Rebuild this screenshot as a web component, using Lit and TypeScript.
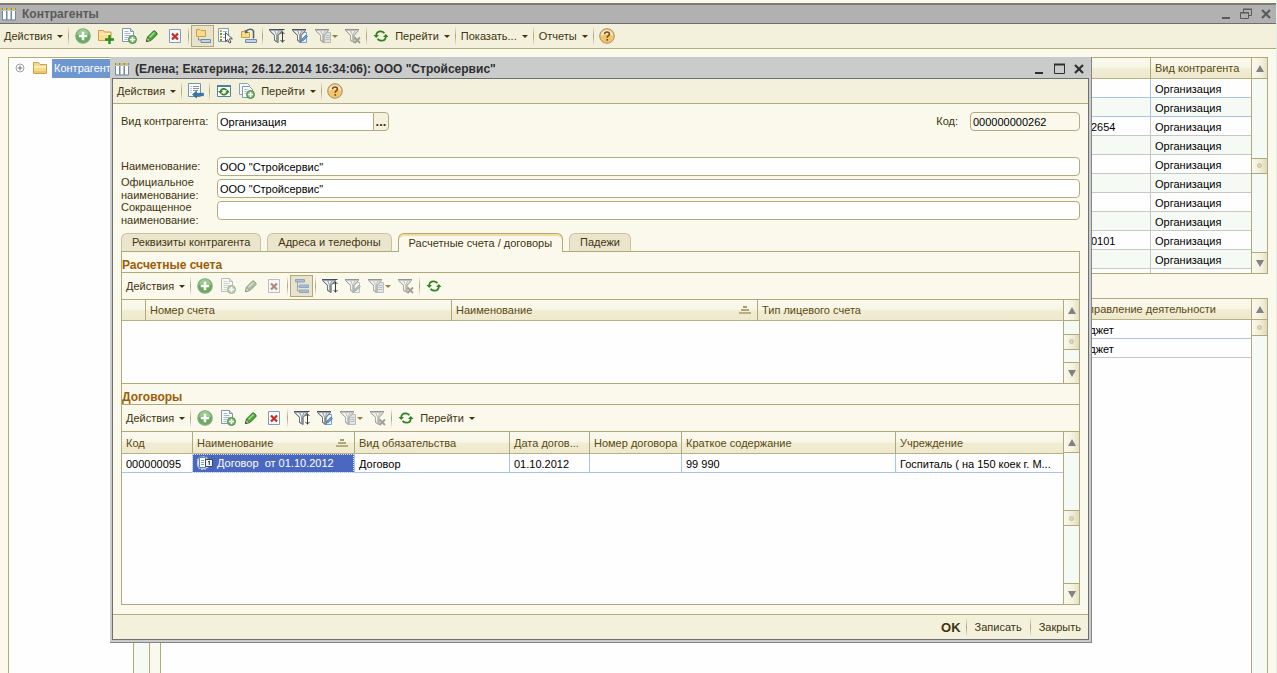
import { LitElement, html, svg, css, nothing } from "lit";
import { customElement, property } from "lit/decorators.js";
import { classMap } from "lit/directives/class-map.js";

const funnel = svg`
  <path d="M0 1h14v1.500L9.500 7.500V15L5 12.500v-5L0 2.500z" fill="#9ca4a9"/>
  <path d="M.5 2.500l5 5v5l3.500 2v-7l4.500-5" fill="none" stroke="#6d777c"/>
  <path d="M2 3h3l2 4v5l-1-.5V7z" fill="#f4f6f7"/>
  <path d="M6.500 3H9L7.800 6.500z" fill="#f4f6f7"/>
  <path d="M10.500 3h1.500L8.500 7z" fill="#dfe3e5"/>
  <path d="M0 1.500h14" stroke="#4b5459"/>`;

const sheet = svg`
  <path d="M1.500.5h8l3 3v10h-11z" fill="#fbfdfe" stroke="#7c99ad"/>
  <path d="M9.500.5v3h3" fill="#d5e3ec" stroke="#7c99ad"/>
  <path d="M3.500 3.500h4M3.500 5.500h6M3.500 7.500h6M3.500 9.500h4M3.500 11.500h3" stroke="#a3b7c4"/>`;

const smallPlus = svg`
  <circle cx="11.500" cy="11.500" r="4" fill="#7db870" stroke="#4d8c46"/>
  <path d="M11.500 9v5M9 11.500h5" stroke="#fff" stroke-width="1.600"/>`;

const arrows = svg`
  <path d="M3.200 7.200C3.500 4.600 5.500 3.200 8 3.400c1.600.1 2.700.8 3.400 1.900" fill="none" stroke="#2e8223" stroke-width="1.700"/>
  <path d="M12.800 8.800c-.3 2.600-2.300 4-4.800 3.800-1.600-.1-2.700-.8-3.400-1.900" fill="none" stroke="#2e8223" stroke-width="1.700"/>
  <path d="M.5 7h5.500L3.200 10zM10 9h5.500L12.800 6z" fill="#2e8223"/>`;

const folderShape = svg`
  <path d="M1.500 13.500v-11h5l1.500 2h6.500v9z" fill="#f6d98a" stroke="#c9a34d"/>
  <path d="M2 6h12v2H2z" fill="#fcecb8"/>
  <path d="M2 11h12v2H2z" fill="#edc766"/>`;

const icons: Record<string, unknown> = {
  table: svg`
    <path d="M2 2.500h12v11H2z" fill="#fff"/>
    <path d="M2 2h3v2.500H2zM6.500 2h3v2.500h-3zM11 2h3v2.500h-3z" fill="#e7bf35"/>
    <path d="M1.500 2v12h4V2M6 2v12h4V2M10.500 2v12h4V2" fill="none" stroke="#71899a"/>
    <path d="M1 4.500h14" stroke="#b9c6cf"/>`,
  add: svg`
    <circle cx="8" cy="8" r="7.200" fill="#67aa5b" stroke="#88a781" stroke-width="1.200"/>
    <path d="M2 7a6 6 0 0 1 12 0c-3-1.500-8-1.500-12 0z" fill="#98cb8c"/>
    <path d="M8 3.800v8.400M3.800 8h8.400" stroke="#fff" stroke-width="2.600"/>`,
  addFolder: svg`
    <path d="M.5 12.500v-10h5l1 1.500h6.500v8.500z" fill="#f8dd92" stroke="#cc9f40"/>
    <path d="M1.500 5.500H12V7H1.500z" fill="#fdeebd"/>
    <path d="M11.500 7v9M7 11.500h9" stroke="#2f8c22" stroke-width="2.400"/>`,
  addSheet: svg`${sheet}${smallPlus}`,
  copySheets: svg`
    <path d="M.5.5h8l2 2v9H.5z" fill="#f4f8fa" stroke="#8ba4b5"/>
    <path d="M3.500 3.500h7l3 3v8h-10z" fill="#fbfdfe" stroke="#7c99ad"/>
    <path d="M5.500 6.500h3M5.500 8.500h2M5.500 10.500h1" stroke="#a3b7c4"/>${smallPlus}`,
  edit: svg`
    <path d="M2.500 13.500l1-4.500 6-6c1-1 4.500 2.300 3.500 3.500l-6 6z" fill="#4ea63c" stroke="#2b7420"/>
    <path d="M5.500 9.500l5-5" stroke="#a5dd92" stroke-width="1.500"/>
    <path d="M2.500 13.500l1-3.800 2.800 2.800z" fill="#f0d9a6" stroke="#38702d" stroke-width=".7"/>
    <path d="M2.200 13.800l.5-1.800 1.300 1.300z" fill="#1f2f1b"/>`,
  remove: svg`
    <path d="M2.500 1.500h11v13h-11z" fill="#f4f9fc" stroke="#7f9db5"/>
    <path d="M5 5.500l6 6M11 5.500l-6 6" stroke="#cc2a1e" stroke-width="2.200"/>`,
  hierarchy: svg`
    <path d="M1.500 8.500v-7h3.500l1 1h4.500v6z" fill="#f9dc8b" stroke="#cc9f40"/>
    <path d="M3.500 9.500v2.500H6" fill="none" stroke="#7b8790"/>
    <path d="M6 11.500h9.500v3H6z" fill="#c3d3e2" stroke="#6f8dab"/>`,
  pick: svg`
    <path d="M.5.500h10v13H.5z" fill="#fafcfd" stroke="#879dac"/>
    <path d="M2 3h2M2 9h2" stroke="#d3a62a" stroke-width="2"/>
    <path d="M2 6h2M2 12h2" stroke="#5e9d50" stroke-width="2"/>
    <path d="M5 3.500h4M5 6.500h2M5 9.500h2" stroke="#9fb0bb"/>
    <path d="M7.500 4.500v9l2.200-2 1.600 3.500 1.700-.8-1.600-3.400h3z" fill="#fff" stroke="#4f4f4f"/>`,
  move: svg`
    <path d="M.5 9.500v-6h3l1 1h4v5z" fill="#f9dc8b" stroke="#cc9f40"/>
    <path d="M5 3.500C7 .5 11 .500 12.500 3v7.500" fill="none" stroke="#59656e" stroke-width="1.600"/>
    <path d="M3.500 1.500l.5 4 3.500-1z" fill="#59656e"/>
    <path d="M4.500 11.500h11v3h-11z" fill="#c3d3e2" stroke="#6f8dab"/>`,
  filterSort: svg`${funnel}
    <path d="M13.500 3.500v11M11.500 6l2-2 2 2M11.500 12l2 2 2-2" fill="none" stroke="#333c42"/>
    <path d="M10 1.500h5.500" stroke="#3f474b"/>`,
  filterEdit: svg`
    <path d="M7.500 4.500h7v10h-7z" fill="#eef4fb" stroke="#7aa0cc"/>${funnel}
    <path d="M9.500 13l.5-2 4-4 1.500 1.500-4 4z" fill="#6b9ddb" stroke="#3f6ea8" stroke-width=".7"/>`,
  filterList: svg`
    <path d="M7.500 4.500h8v10h-8z" fill="#c9dbea" stroke="#7f9db5"/>${funnel}
    <path d="M10.500 7.500h4M10.500 9.500h4M10.500 11.500h4" stroke="#7f9db5"/>`,
  filterClear: svg`${funnel}
    <path d="M9.500 9.500l5.500 5.500M15 9.500L9.500 15" stroke="#745d59" stroke-width="1.800"/>`,
  refresh: arrows,
  help: svg`
    <circle cx="8" cy="8" r="7.300" fill="#f4c46c" stroke="#a5906d"/>
    <path d="M2 8a6 6 0 0 1 12 0c-3-2-9-2-12 0z" fill="#fdebc5"/>
    <path d="M5.600 6.200C5.600 3.300 10.500 3.300 10.500 6c0 1.700-2.300 1.700-2.300 3.700" fill="none" stroke="#7a4a18" stroke-width="1.600"/>
    <path d="M7.400 11h1.700v1.700H7.400z" fill="#7a4a18"/>`,
  saveClose: svg`
    <path d="M.5.500h12v13H.5z" fill="#fbfdfe" stroke="#7392a8"/>
    <path d="M2.500 3.500h1M2.500 5.500h1M2.500 7.500h1M2.500 9.500h1M5 3.500h6M5 5.500h6M5 7.500h5" stroke="#7e95a4"/>
    <path d="M4.500 11.500l4-3.500v2.300h7v2.400h-7V15z" fill="#3577ae" stroke="#235985" stroke-width=".6"/>`,
  reread: svg`
    <path d="M1.500 2.500h13v11h-13z" fill="#fff" stroke="#54809f"/>
    <path d="M1 2h14v2H1z" fill="#4f7fa1"/>
    <path d="M4.500 8.500C5 5.500 9 5 10.500 7M11.500 9c-.5 3-4.500 3.500-6 1.500" fill="none" stroke="#2e8223" stroke-width="1.700"/>
    <path d="M2.200 8h4.600L4.500 11zM9.200 9.500h4.600L11.500 6.500z" fill="#2e8223"/>`,
  levels: svg`
    <path d="M1.500 1.500h9v2.500h-9z" fill="#a9c0d8" stroke="#8ba5c1"/>
    <path d="M3.500 4v9h3M3.500 8.500h3" fill="none" stroke="#98a5af"/>
    <path d="M5.500 7h9v2.500h-9zM5.500 12h9v2.500h-9z" fill="#a9c0d8" stroke="#8ba5c1"/>`,
  contract: svg`
    <circle cx="6" cy="8" r="6" fill="#dce8f2" stroke="#b6cbdd" stroke-width="2" stroke-dasharray="2 1"/>
    <path d="M2.500 2.500h6v10h-6z" fill="#fff" stroke="#6885a6"/>
    <path d="M4 5.500h3M4 7.500h3M4 9.500h3" stroke="#8299b4"/>
    <path d="M8.500 4.500h7v7h-7z" fill="#f7f5e8" stroke="#2d496f"/>
    <path d="M11 7l1.300-1v4" fill="none" stroke="#24395b"/>`,
  folder: folderShape,
  expand: svg`
    <circle cx="8" cy="8" r="4" fill="#fff" stroke="#a5a5a5"/>
    <path d="M5.500 8h5M8 5.500v5" stroke="#777"/>`,
  sort: svg`
    <path d="M6 4h4v2H6z" fill="#a69d6d"/>
    <path d="M4 7h8v2H4z" fill="#b1a777"/>
    <path d="M2 10h12v2H2z" fill="#b8ae80"/>`,
  minimize: svg`<path d="M4 11h8v2H4z" fill="currentColor"/>`,
  maximize: svg`<path d="M3.500 3.500h10v9h-10z" fill="none" stroke="currentColor"/><path d="M3 3.500h11" stroke="currentColor" stroke-width="2"/>`,
  restore: svg`
    <path d="M5.500 6V3.500h8v6H11" fill="none" stroke="currentColor"/>
    <path d="M2.500 6.500h8v6h-8z" fill="none" stroke="currentColor"/>
    <path d="M5 3h9M2 7h9" stroke="currentColor"/>`,
  close: svg`<path d="M4 4l8 8M12 4l-8 8" stroke="currentColor" stroke-width="2.200"/>`,
};

@customElement("ui-icon")
class UiIcon extends LitElement {
  @property() name = "";
  static styles = css`
    :host { display: inline-flex; flex: none; width: 16px; height: 16px; }
    svg { width: 16px; height: 16px; }
  `;
  render() {
    return html`<svg viewBox="0 0 16 16" aria-hidden="true">${icons[this.name]}</svg>`;
  }
}

interface Tool {
  icon?: string;
  label?: string;
  hint?: string;
  menu?: boolean;
  on?: boolean;
  muted?: boolean;
  strong?: boolean;
}
type ToolItem = Tool | "|";

@customElement("tool-bar")
class ToolBar extends LitElement {
  @property({ attribute: false }) items: ToolItem[] = [];
  static styles = css`
    :host { display: flex; align-items: center; }
    button {
      display: flex; align-items: center; justify-content: center;
      height: 22px; min-width: 23px; border: 1px solid transparent;
      background: none; color: #40350f; font: 11px "Liberation Sans", Arial, sans-serif;
      white-space: nowrap;
    }
    .icon { padding: 0 2px; margin: 0; }
    .icon.menu { padding: 0 2px 0 3px; }
    .text { padding: 0 5px; }
    .text.menu { padding: 0 2px; }
    .on { background: #e9e3cb; border-color: #b1a77f; }
    .muted ui-icon { opacity: 0.6; filter: grayscale(0.6); }
    .text.strong { padding: 0 2px; font-weight: bold; font-size: 13px; }
    .caret {
      width: 0; height: 0; margin-left: 5px;
      border: 3px solid transparent; border-top-color: currentColor; border-bottom: 0;
    }
    .icon .caret { margin-left: 1px; color: #93803d; }
    .line {
      flex: none; width: 1px; height: 20px; margin: 0 2px;
      background: linear-gradient(transparent, #aca37c, transparent);
    }
  `;
  render() {
    return this.items.map((t) =>
      t === "|"
        ? html`<span class="line"></span>`
        : html`<button
            class=${classMap({ icon: !!t.icon, text: !!t.label, menu: !!t.menu, on: !!t.on, muted: !!t.muted, strong: !!t.strong })}
            aria-label=${t.label ?? t.hint ?? ""}
          >${t.icon ? html`<ui-icon name=${t.icon}></ui-icon>` : nothing}${t.label ?? nothing}${t.menu
            ? html`<span class="caret"></span>`
            : nothing}</button>`
    );
  }
}

@customElement("scroll-bar")
class ScrollBar extends LitElement {
  @property({ type: Boolean }) start = false;
  static styles = css`
    :host {
      display: flex; flex-direction: column; flex: none; box-sizing: border-box;
      width: 16px; border-left: 1px solid #b0a97c; background: #f5faf5;
    }
    button {
      flex: none; display: flex; align-items: center; justify-content: center;
      height: 21px; padding: 0; border: 0;
      background: linear-gradient(90deg, #fbf9ee, #f4f1dd 60%, #e6e0c4);
    }
    .up { border-bottom: 1px solid #b0a97c; }
    .down { border-top: 1px solid #b0a97c; }
    .up i { border: 4px solid transparent; border-bottom: 7px solid #828282; border-top: 0; }
    .down i { border: 4px solid transparent; border-top: 7px solid #828282; border-bottom: 0; }
    .track { flex: 1; display: flex; flex-direction: column; justify-content: center; }
    .first { justify-content: flex-start; }
    .thumb {
      display: flex; align-items: center; justify-content: center; box-sizing: border-box;
      height: 16px; border: solid #b0a97c; border-width: 1px 0;
      background: linear-gradient(90deg, #fbf9ee, #f0ebd3 60%, #e0d9b8);
    }
    .first .thumb { border-top: 0; }
    .dot { width: 3px; height: 3px; border: 1px solid #c9c19c; border-radius: 50%; background: #ddd6b6; }
  `;
  render() {
    return html`
      <button class="up" aria-label="Вверх"><i></i></button>
      <div class=${classMap({ track: true, first: this.start })}>
        <div class="thumb"><span class="dot"></span></div>
      </div>
      ${this.start ? nothing : html`<button class="down" aria-label="Вниз"><i></i></button>`}
    `;
  }
}

const mainTools: ToolItem[] = [
  { label: "Действия", menu: true }, "|",
  { icon: "add", hint: "Добавить" }, { icon: "addFolder", hint: "Новая группа" },
  { icon: "addSheet", hint: "Скопировать" }, { icon: "edit", hint: "Изменить" },
  { icon: "remove", hint: "Пометить на удаление" }, "|",
  { icon: "hierarchy", hint: "Иерархия", on: true }, { icon: "pick", hint: "Выбрать" },
  { icon: "move", hint: "Переместить в группу" }, "|",
  { icon: "filterSort", hint: "Отбор и сортировка" }, { icon: "filterEdit", hint: "Отбор по значению" },
  { icon: "filterList", hint: "История отборов", menu: true, muted: true },
  { icon: "filterClear", hint: "Отключить отбор", muted: true }, "|",
  { icon: "refresh", hint: "Обновить" }, { label: "Перейти", menu: true }, "|",
  { label: "Показать...", menu: true }, "|", { label: "Отчеты", menu: true }, "|",
  { icon: "help", hint: "Справка" },
];

const dialogTools: ToolItem[] = [
  { label: "Действия", menu: true }, "|", { icon: "saveClose", hint: "Записать и закрыть" }, "|",
  { icon: "reread", hint: "Перечитать" }, { icon: "copySheets", hint: "Скопировать" },
  { label: "Перейти", menu: true }, "|", { icon: "help", hint: "Справка" },
];

const accountTools: ToolItem[] = [
  { label: "Действия", menu: true }, "|", { icon: "add", hint: "Добавить" },
  { icon: "addSheet", hint: "Скопировать", muted: true }, { icon: "edit", hint: "Изменить", muted: true },
  { icon: "remove", hint: "Удалить", muted: true }, "|", { icon: "levels", hint: "Иерархия", on: true }, "|",
  { icon: "filterSort", hint: "Отбор и сортировка" }, { icon: "filterEdit", hint: "Отбор по значению", muted: true },
  { icon: "filterList", hint: "История отборов", menu: true, muted: true },
  { icon: "filterClear", hint: "Отключить отбор", muted: true }, "|", { icon: "refresh", hint: "Обновить" },
];

const contractTools: ToolItem[] = [
  { label: "Действия", menu: true }, "|", { icon: "add", hint: "Добавить" },
  { icon: "addSheet", hint: "Скопировать" }, { icon: "edit", hint: "Изменить" },
  { icon: "remove", hint: "Удалить" }, "|",
  { icon: "filterSort", hint: "Отбор и сортировка" }, { icon: "filterEdit", hint: "Отбор по значению" },
  { icon: "filterList", hint: "История отборов", menu: true, muted: true },
  { icon: "filterClear", hint: "Отключить отбор", muted: true }, "|",
  { icon: "refresh", hint: "Обновить" }, { label: "Перейти", menu: true },
];

const footerTools: ToolItem[] = [
  { label: "OK", strong: true }, "|", { label: "Записать" }, "|", { label: "Закрыть" },
];

const tabs = ["Реквизиты контрагента", "Адреса и телефоны", "Расчетные счета / договоры", "Падежи"];
const codes = ["", "", "2654", "", "", "", "", "", "0101", "", ""];

@customElement("app-root")
class AppRoot extends LitElement {
  static styles = css`
    :host {
      display: flex; flex-direction: column; position: relative; box-sizing: border-box;
      height: 100vh; overflow: hidden; padding-top: 3px; border-right: 1px solid #e0efe6;
      background: #fbf9ec; color: #40350f; font: 11px/13px "Liberation Sans", Arial, sans-serif;
    }
    h1, h2, h3 { margin: 0; }
    .bar { display: flex; align-items: center; gap: 5px; flex: none; height: 20px; box-sizing: border-box; }
    .bar h1, .bar h2 { flex: 1; font-size: 12px; line-height: 16px; }
    .bar button { display: flex; padding: 0; border: 0; background: none; color: inherit; }
    .winbtns { display: flex; gap: 4px; }
    .mainbar {
      height: 21px; padding: 0 2px 0 1px; color: #5a5a5a; background: #b1b1b1;
      border-top: 2px solid #7d7b76; border-bottom: 1px solid #6e6e6e;
    }
    .maintools { flex: none; height: 24px; padding-left: 1px; background: #f3f0dc; border-bottom: 1px solid #b5ad80; }
    .desk { flex: 1; min-height: 0; display: flex; gap: 10px; padding: 8px 8px 0; }
    .tree, .grid { border: 1px solid #b0a97c; background: #fefefe; }
    .tree { flex: none; width: 140px; display: flex; border-bottom: 0; overflow: hidden; }
    .nodes { flex: 1; min-width: 0; }
    .node { display: flex; align-items: center; height: 20px; padding-left: 3px; gap: 4px; }
    .node b { padding: 0 2px; font-weight: normal; line-height: 19px; background: #6e97d0; color: #fff; }
    .rail { flex: none; width: 15px; border-left: 1px solid #b0a97c; background: #f5faf5; }
    .lists { flex: 1; min-width: 0; display: flex; flex-direction: column; gap: 24px; }
    .grid { display: flex; min-height: 0; box-sizing: border-box; overflow: hidden; }
    .upper { flex: none; height: 217px; }
    .lower { flex: 1; border-bottom: 0; }
    .rows { flex: 1; min-width: 0; overflow: hidden; }
    table { width: 100%; border-collapse: separate; border-spacing: 0; table-layout: fixed; }
    th, td {
      box-sizing: border-box; padding: 0 0 0 4px; text-align: left; font-weight: normal;
      white-space: nowrap; overflow: hidden; text-overflow: ellipsis;
    }
    th + th, td + td { border-left: 1px solid #c6c9c2; }
    th + th { border-left-color: #b0a97c; }
    th {
      height: 21px; color: #5b4a12; border-bottom: 1px solid #b8b087;
      background: linear-gradient(#fbf9ee, #f8f6e6 45%, #f1edd4 55%, #efe9cc);
    }
    .contracts th { height: 22px; padding-top: 1px; }
    td { height: 19px; padding-top: 2px; color: #000; border-bottom: 1px solid #c6c9c2; }
    .blue td { border-color: #a9c4e6; }
    .striped tr:nth-child(even) td { background: #f5faf5; }
    .c-type { width: 101px; }
    .c-code { width: 64px; }
    .c-dir { width: 182px; }
    .c-mark { width: 23px; }
    .c-wide { width: 306px; }
    .c-id { width: 70px; }
    .c-name { width: 162px; }
    .c-kind { width: 155px; }
    .c-date { width: 80px; }
    .c-num { width: 92px; }
    .c-short { width: 214px; }
    .sorted { display: flex; justify-content: space-between; align-items: center; padding-right: 4px; }
    td.picked { padding: 0 4px; color: #fff; background: #4b68c0; outline: 1px dotted #dfe6ff; outline-offset: -1px; }
    .withicon { display: flex; align-items: center; gap: 4px; white-space: pre; }

    .dialog {
      position: absolute; left: 110px; right: 184px; top: 57px; bottom: 30px;
      display: flex; flex-direction: column; box-sizing: border-box; padding: 0 2px 2px;
      background: #cacccc; border-right: 1px solid #86868a; border-bottom: 1px solid #86868a;
    }
    .dialog > .bar { height: 21px; padding: 2px 2px 0 2px; color: #2e2e2e; }
    .frame {
      flex: 1; min-height: 0; display: flex; flex-direction: column;
      border: 1px solid #6f6f6f; background: #fbf9ec;
    }
    .dialogtools { flex: none; height: 24px; padding-left: 1px; background: #f3f0dc; border-bottom: 1px solid #b5ad80; }
    .body { flex: 1; min-height: 0; display: flex; flex-direction: column; padding: 8px 8px 9px; }
    .head { display: flex; align-items: center; margin-bottom: 26px; }
    .head label { width: 96px; }
    .head .codelabel { width: auto; margin-left: auto; padding-right: 12px; }
    input {
      box-sizing: border-box; height: 19px; min-width: 0; width: 100%; padding: 0 2px;
      border: 1px solid #b3ab80; border-radius: 4px; background: #fff; color: #000; font: inherit;
    }
    .combo { display: flex; width: 172px; }
    .combo input { border-right: 0; border-radius: 4px 0 0 4px; }
    .combo button {
      flex: none; width: 16px; height: 19px; padding: 0; border: 1px solid #b3ab80;
      border-radius: 0 4px 4px 0; background: #f5f1dd; color: #40350f; font: bold 13px "Liberation Sans", Arial, sans-serif;
    }
    .code { width: 110px; background: #fbf9ec; }
    .names { display: grid; grid-template-columns: 96px 1fr; grid-auto-rows: 19px; row-gap: 3px; align-items: center; margin-bottom: 13px; }
    .names .high { align-self: start; }
    .tabs { display: flex; gap: 6px; flex: none; }
    .tabs button {
      height: 18px; padding: 0 10px; border: 1px solid #cbc39d; border-bottom: 0; border-radius: 6px 6px 0 0;
      background: #ece5cd; color: #40350f; font: inherit; white-space: nowrap;
    }
    .tabs .current {
      position: relative; height: 19px; margin-bottom: -1px; border-color: #b0a97c;
      background: #fbf9ec; box-shadow: inset 0 2px #f5dc9d;
    }
    .panel { flex: 1; min-height: 0; display: flex; flex-direction: column; border: 1px solid #b0a97c; }
    .panel h3 {
      flex: none; height: 20px; border-bottom: 1px solid #b0a97c; color: #9c5c08;
      font: bold 12px/26px "Liberation Sans", Arial, sans-serif; 
    }
    .panel tool-bar { flex: none; height: 26px; padding-left: 1px; border-bottom: 1px solid #b0a97c; }
    .panel .grid { border: 0; }
    .panel .accounts { flex: none; height: 84px; border-bottom: 1px solid #b0a97c; }
    .panel .contracts { flex: 1; }
    .footer { flex: none; height: 24px; justify-content: flex-end; padding-right: 1px; background: #f3f0dc; border-top: 1px solid #b5ad80; }
  `;

  render() {
    return html`
      <header class="bar mainbar">
        <ui-icon name="table"></ui-icon>
        <h1>Контрагенты</h1>
        <div class="winbtns">
          <button aria-label="Свернуть"><ui-icon name="minimize"></ui-icon></button>
          <button aria-label="Восстановить"><ui-icon name="restore"></ui-icon></button>
          <button aria-label="Закрыть"><ui-icon name="close"></ui-icon></button>
        </div>
      </header>
      <tool-bar class="maintools" .items=${mainTools}></tool-bar>
      <main class="desk">
        <nav class="tree">
          <div class="nodes">
            <div class="node"><ui-icon name="expand"></ui-icon><ui-icon name="folder"></ui-icon><b>Контрагенты</b></div>
          </div>
          <div class="rail"></div>
        </nav>
        <div class="lists">${this.partners()}${this.directions()}</div>
      </main>
      ${this.dialog()}
    `;
  }

  partners() {
    return html`<section class="grid upper">
      <div class="rows">
        <table class="striped">
          <colgroup><col /><col class="c-code" /><col class="c-type" /></colgroup>
          <thead><tr><th></th><th></th><th>Вид контрагента</th></tr></thead>
          <tbody>
            ${codes.map((c, i) => html`<tr class=${classMap({ blue: i < 2 })}>
              <td></td><td>${c}</td><td>${i < 10 ? "Организация" : ""}</td>
            </tr>`)}
          </tbody>
        </table>
      </div>
      <scroll-bar></scroll-bar>
    </section>`;
  }

  directions() {
    return html`<section class="grid lower">
      <div class="rows">
        <table>
          <colgroup><col /><col class="c-dir" /></colgroup>
          <thead><tr><th></th><th>Направление деятельности</th></tr></thead>
          <tbody>
            <tr class="blue"><td></td><td>Бюджет</td></tr>
            <tr><td></td><td>Бюджет</td></tr>
          </tbody>
        </table>
      </div>
      <scroll-bar start></scroll-bar>
    </section>`;
  }

  dialog() {
    return html`<section class="dialog" role="dialog" aria-labelledby="caption">
      <header class="bar">
        <ui-icon name="table"></ui-icon>
        <h2 id="caption">(Елена; Екатерина; 26.12.2014 16:34:06): ООО "Стройсервис"</h2>
        <div class="winbtns">
          <button aria-label="Свернуть"><ui-icon name="minimize"></ui-icon></button>
          <button aria-label="Развернуть"><ui-icon name="maximize"></ui-icon></button>
          <button aria-label="Закрыть"><ui-icon name="close"></ui-icon></button>
        </div>
      </header>
      <div class="frame">
        <tool-bar class="dialogtools" .items=${dialogTools}></tool-bar>
        <div class="body">
          <div class="head">
            <label for="kind">Вид контрагента:</label>
            <div class="combo"><input id="kind" value="Организация" /><button aria-label="Выбрать">...</button></div>
            <label class="codelabel" for="code">Код:</label>
            <input class="code" id="code" value="000000000262" readonly />
          </div>
          <div class="names">
            <label for="name">Наименование:</label>
            <input id="name" value='ООО "Стройсервис"' />
            <label for="official">Официальное<br />наименование:</label>
            <input id="official" value='ООО "Стройсервис"' />
            <label class="high" for="short">Сокращенное<br />наименование:</label>
            <input id="short" value="" />
          </div>
          <div class="tabs" role="tablist">
            ${tabs.map((t, i) => html`<button role="tab" aria-selected=${i === 2 ? "true" : "false"} class=${classMap({ current: i === 2 })}>${t}</button>`)}
          </div>
          <div class="panel">
            <h3>Расчетные счета</h3>
            <tool-bar .items=${accountTools}></tool-bar>
            <div class="grid accounts">
              <div class="rows">
                <table>
                  <colgroup><col class="c-mark" /><col class="c-wide" /><col class="c-wide" /><col /></colgroup>
                  <thead><tr>
                    <th></th><th>Номер счета</th>
                    <th><div class="sorted">Наименование<ui-icon name="sort"></ui-icon></div></th>
                    <th>Тип лицевого счета</th>
                  </tr></thead>
                </table>
              </div>
              <scroll-bar></scroll-bar>
            </div>
            <h3>Договоры</h3>
            <tool-bar .items=${contractTools}></tool-bar>
            <div class="grid contracts">
              <div class="rows">
                <table>
                  <colgroup>
                    <col class="c-id" /><col class="c-name" /><col class="c-kind" /><col class="c-date" />
                    <col class="c-num" /><col class="c-short" /><col />
                  </colgroup>
                  <thead><tr>
                    <th>Код</th>
                    <th><div class="sorted">Наименование<ui-icon name="sort"></ui-icon></div></th>
                    <th>Вид обязательства</th><th>Дата догов...</th><th>Номер договора</th>
                    <th>Краткое содержание</th><th>Учреждение</th>
                  </tr></thead>
                  <tbody><tr class="blue">
                    <td>000000095</td>
                    <td class="picked"><div class="withicon"><ui-icon name="contract"></ui-icon>Договор  от 01.10.2012</div></td>
                    <td>Договор</td><td>01.10.2012</td><td></td><td>99 990</td>
                    <td>Госпиталь ( на 150 коек г. М...</td>
                  </tr></tbody>
                </table>
              </div>
              <scroll-bar></scroll-bar>
            </div>
          </div>
        </div>
        <tool-bar class="footer" .items=${footerTools}></tool-bar>
      </div>
    </section>`;
  }
}
